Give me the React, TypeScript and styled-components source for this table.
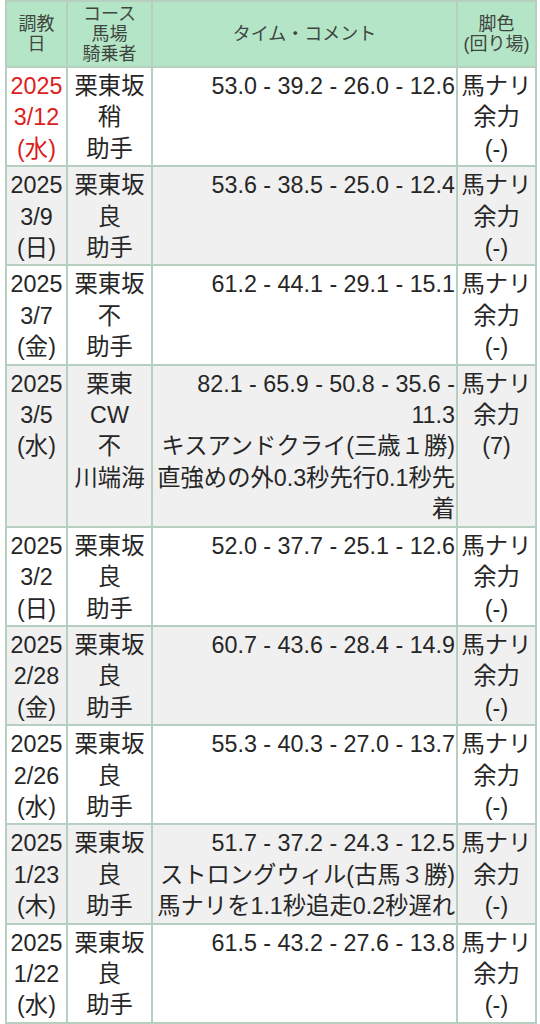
import React from "react";
import styled, { createGlobalStyle } from "styled-components";

type Align = "left" | "center" | "right";

interface WorkoutRow {
    date: string[];
    course: string[];
    time: string;
    comment: string[];
    leg: string[];
    latest?: boolean;
}

const ROWS: WorkoutRow[] = [
    { date: ["2025", "3/12", "(水)"], course: ["栗東坂", "稍", "助手"], time: "53.0 - 39.2 - 26.0 - 12.6", comment: [], leg: ["馬ナリ", "余力", "(-)"], latest: true },
    { date: ["2025", "3/9", "(日)"], course: ["栗東坂", "良", "助手"], time: "53.6 - 38.5 - 25.0 - 12.4", comment: [], leg: ["馬ナリ", "余力", "(-)"] },
    { date: ["2025", "3/7", "(金)"], course: ["栗東坂", "不", "助手"], time: "61.2 - 44.1 - 29.1 - 15.1", comment: [], leg: ["馬ナリ", "余力", "(-)"] },
    {
        date: ["2025", "3/5", "(水)"],
        course: ["栗東", "CW", "不", "川端海"],
        time: "82.1 - 65.9 - 50.8 - 35.6 - 11.3",
        comment: ["キスアンドクライ(三歳１勝)", "直強めの外0.3秒先行0.1秒先着"],
        leg: ["馬ナリ", "余力", "(7)"],
    },
    { date: ["2025", "3/2", "(日)"], course: ["栗東坂", "良", "助手"], time: "52.0 - 37.7 - 25.1 - 12.6", comment: [], leg: ["馬ナリ", "余力", "(-)"] },
    { date: ["2025", "2/28", "(金)"], course: ["栗東坂", "良", "助手"], time: "60.7 - 43.6 - 28.4 - 14.9", comment: [], leg: ["馬ナリ", "余力", "(-)"] },
    { date: ["2025", "2/26", "(水)"], course: ["栗東坂", "良", "助手"], time: "55.3 - 40.3 - 27.0 - 13.7", comment: [], leg: ["馬ナリ", "余力", "(-)"] },
    {
        date: ["2025", "1/23", "(木)"],
        course: ["栗東坂", "良", "助手"],
        time: "51.7 - 37.2 - 24.3 - 12.5",
        comment: ["ストロングウィル(古馬３勝)", "馬ナリを1.1秒追走0.2秒遅れ"],
        leg: ["馬ナリ", "余力", "(-)"],
    },
    { date: ["2025", "1/22", "(水)"], course: ["栗東坂", "良", "助手"], time: "61.5 - 43.2 - 27.6 - 13.8", comment: [], leg: ["馬ナリ", "余力", "(-)"] },
];

const GlobalStyle = createGlobalStyle`
    html, body {
        margin: 0;
        padding: 0;
        background: #ffffff;
    }
    body {
        font-family: "Liberation Sans", "Noto Sans CJK JP", sans-serif;
        color: #262626;
        overflow: hidden;
    }
`;

const Page = styled.div`
    padding-left: 5px;
`;

const Table = styled.table`
    width: 532px;
    table-layout: fixed;
    border-collapse: separate;
    border-spacing: 0;
    border-left: 2px solid #b6cfc1;
    border-top: 2px solid #b6cfc1;
`;

const HeadCell = styled.th`
    background-color: #b5e5c7;
    color: #3f4641;
    font-size: 18px;
    line-height: 20px;
    font-weight: normal;
    text-align: center;
    vertical-align: middle;
    padding: 2px 0;
    border-right: 2px solid #b6cfc1;
    border-bottom: 2px solid #b6cfc1;
    white-space: nowrap;
`;

const BodyRow = styled.tr<{ $shade: boolean }>`
    background-color: ${({ $shade }) => ($shade ? "#f0f0f0" : "#ffffff")};
`;

const Cell = styled.td<{ $align: Align; $accent?: boolean }>`
    font-size: 23.3px;
    line-height: 31.4px;
    padding: 3px 1px 0;
    vertical-align: top;
    text-align: ${({ $align }) => $align};
    color: ${({ $accent }) => ($accent ? "#dd1c1c" : "#262626")};
    border-right: 2px solid #b6cfc1;
    border-bottom: 2px solid #b6cfc1;
`;

const Line = styled.div`
    white-space: nowrap;
`;

const WrapLine = styled.div`
    white-space: normal;
`;

const App: React.FC = () => {
    return (
        <Page>
            <GlobalStyle />
            <Table>
                <colgroup>
                    <col style={{ width: 61 }} />
                    <col style={{ width: 85 }} />
                    <col style={{ width: 305 }} />
                    <col style={{ width: 79 }} />
                </colgroup>
                <thead>
                    <tr>
                        <HeadCell>調教<br />日</HeadCell>
                        <HeadCell>コース<br />馬場<br />騎乗者</HeadCell>
                        <HeadCell>タイム・コメント</HeadCell>
                        <HeadCell>脚色<br />(回り場)</HeadCell>
                    </tr>
                </thead>
                <tbody>
                    {ROWS.map((row, i) => (
                        <BodyRow key={i} $shade={i % 2 === 1}>
                            <Cell $align="center" $accent={row.latest}>
                                {row.date.map((d) => (
                                    <Line key={d}>{d}</Line>
                                ))}
                            </Cell>
                            <Cell $align="center">
                                {row.course.map((c, j) => (
                                    <Line key={j}>{c}</Line>
                                ))}
                            </Cell>
                            <Cell $align="right">
                                <WrapLine>{row.time}</WrapLine>
                                {row.comment.map((c) => (
                                    <WrapLine key={c}>{c}</WrapLine>
                                ))}
                            </Cell>
                            <Cell $align="center">
                                {row.leg.map((l) => (
                                    <Line key={l}>{l}</Line>
                                ))}
                            </Cell>
                        </BodyRow>
                    ))}
                </tbody>
            </Table>
        </Page>
    );
};

export default App;
